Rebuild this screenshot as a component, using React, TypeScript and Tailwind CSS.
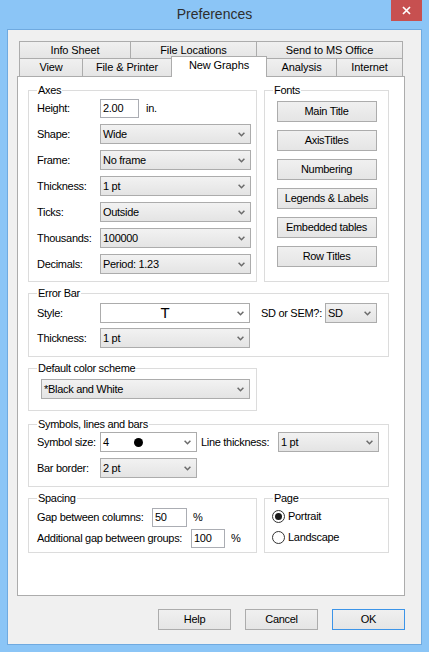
import type { ReactNode } from "react"

type GroupProps = {
  readonly title: string
  readonly className: string
  readonly children?: ReactNode
}

function Group({ title, className, children }: GroupProps) {
  return (
    <div className={`flex flex-col border border-[#dcdcdc] ${className}`}>
      <div className="-mt-[7px] ml-[8px] w-fit bg-white px-px leading-[13px]">{title}</div>
      {children}
    </div>
  )
}

function Chevron() {
  return (
    <svg width="7" height="5" viewBox="0 0 7 5" className="mr-[5px] shrink-0">
      <path d="M0.6 0.7 L3.5 3.7 L6.4 0.7" fill="none" stroke="#6b6b6b" strokeWidth="1.5" />
    </svg>
  )
}

type ComboProps = {
  readonly value: ReactNode
  readonly className: string
  readonly white?: boolean
}

function Combo({ value, className, white = false }: ComboProps) {
  return (
    <div
      className={`flex items-center border border-[#acacac] ${
        white ? "bg-white" : "bg-linear-to-b from-[#f2f2f2] to-[#e4e4e4]"
      } ${className}`}
    >
      <div className="flex min-w-0 flex-1 items-center pl-[2px]">{value}</div>
      <Chevron />
    </div>
  )
}

function TextBox({ value, className }: { readonly value: string; readonly className: string }) {
  return (
    <div className={`flex items-center border border-[#abadb3] bg-white pl-[2px] ${className}`}>
      {value}
    </div>
  )
}

function PushButton({ label, className }: { readonly label: string; readonly className: string }) {
  return (
    <button
      type="button"
      className={`flex items-center justify-center border bg-linear-to-b from-[#f0f0f0] to-[#e5e5e5] leading-[13px] ${className}`}
    >
      {label}
    </button>
  )
}

function Radio({ checked, label }: { readonly checked: boolean; readonly label: string }) {
  return (
    <div className="flex h-[19px] items-center">
      <span className="flex h-[13px] w-[13px] items-center justify-center rounded-full border border-[#333333] bg-white">
        {checked && <span className="h-[7px] w-[7px] rounded-full bg-[#1b1b1b]" />}
      </span>
      <span className="ml-[3px]">{label}</span>
    </div>
  )
}

function Row({ label, children, labelWidth = "w-[63px]" }: {
  readonly label: string
  readonly children: ReactNode
  readonly labelWidth?: string
}) {
  return (
    <div className="flex h-[20px] items-center">
      <span className={`shrink-0 ${labelWidth}`}>{label}</span>
      {children}
    </div>
  )
}

const backTabs = [
  { label: "Info Sheet", width: "w-[111px]" },
  { label: "File Locations", width: "w-[126px]" },
  { label: "Send to MS Office", width: "w-[147px] border-r" },
]

const axesRows = [
  { label: "Shape:", value: "Wide" },
  { label: "Frame:", value: "No frame" },
  { label: "Thickness:", value: "1 pt" },
  { label: "Ticks:", value: "Outside" },
  { label: "Thousands:", value: "100000" },
  { label: "Decimals:", value: "Period: 1.23" },
]

const fontButtons = ["Main Title", "AxisTitles", "Numbering", "Legends & Labels", "Embedded tables", "Row Titles"]

export default function App() {
  return (
    <div className="flex h-[652px] w-[429px] flex-col whitespace-nowrap bg-[#8bc5f6] font-['Liberation_Sans',Arial,sans-serif] text-[11px] leading-[13px] tracking-[-0.3px] text-black">
      <div className="relative flex h-[29px] shrink-0 items-center justify-center pb-[1px]">
        <span className="text-[14px] leading-[18px] tracking-normal text-[#2e2e2e]">Preferences</span>
        <div className="absolute right-[7px] top-0 flex h-[21px] w-[31px] items-center justify-center bg-[#c75050]">
          <svg width="9" height="9" viewBox="0 0 9 9">
            <path d="M1 1 L8 8 M8 1 L1 8" stroke="#ffffff" strokeWidth="1.7" />
          </svg>
        </div>
      </div>

      <div className="mx-[7px] mb-[7px] flex flex-1 flex-col border border-[#6faae0] bg-[#f0f0f0] pl-[9px] pt-[11px]">
        <div className="flex w-[388px] flex-col">
          <div className="ml-[2px] flex h-[17px] tracking-[-0.1px]">
            {backTabs.map((tab) => (
              <div
                key={tab.label}
                className={`flex items-center justify-center border-l border-t border-[#acacac] bg-linear-to-b from-[#f0f0f0] to-[#e5e5e5] ${tab.width}`}
              >
                {tab.label}
              </div>
            ))}
          </div>
          <div className="ml-[2px] flex h-[18px] items-start tracking-[-0.1px]">
            <div className="flex h-[18px] w-[63px] items-center justify-center border-l border-t border-[#acacac] bg-linear-to-b from-[#f0f0f0] to-[#e5e5e5]">
              View
            </div>
            <div className="flex h-[18px] w-[89px] items-center justify-center border-l border-t border-[#acacac] bg-linear-to-b from-[#f0f0f0] to-[#e5e5e5]">
              File &amp; Printer
            </div>
            <div className="relative z-10 -mt-[2px] flex h-[21px] w-[96px] justify-center border-l border-r border-t border-[#acacac] bg-white pt-[2px]">
              New Graphs
            </div>
            <div className="flex h-[18px] w-[69px] items-center justify-center border-t border-[#acacac] bg-linear-to-b from-[#f0f0f0] to-[#e5e5e5]">
              Analysis
            </div>
            <div className="flex h-[18px] w-[67px] items-center justify-center border-l border-r border-t border-[#acacac] bg-linear-to-b from-[#f0f0f0] to-[#e5e5e5]">
              Internet
            </div>
          </div>

          <div className="flex h-[520px] flex-col border border-[#acacac] bg-white pl-[10px] pt-[13px]">
            <div className="flex gap-[7px]">
              <Group title="Axes" className="h-[192px] w-[229px]">
                <div className="mt-[1px] flex flex-col gap-[6px] pl-[8px]">
                  <Row label="Height:">
                    <TextBox value="2.00" className="h-[19px] w-[39px]" />
                    <span className="ml-[7px]">in.</span>
                  </Row>
                  {axesRows.map((row) => (
                    <Row key={row.label} label={row.label}>
                      <Combo value={row.value} className="h-[20px] w-[151px]" />
                    </Row>
                  ))}
                </div>
              </Group>
              <Group title="Fonts" className="h-[192px] w-[125px]">
                <div className="mt-[4px] flex flex-col items-center gap-[8px]">
                  {fontButtons.map((label) => (
                    <PushButton key={label} label={label} className="h-[21px] w-[100px] border-[#acacac]" />
                  ))}
                </div>
              </Group>
            </div>

            <Group title="Error Bar" className="mt-[11px] h-[64px] w-[361px]">
              <div className="mt-[3px] flex flex-col gap-[5px] pl-[8px]">
                <Row label="Style:">
                  <Combo
                    white
                    value={<span className="flex-1 pr-[10px] text-center text-[15px] leading-[16px]">T</span>}
                    className="h-[20px] w-[150px]"
                  />
                  <span className="ml-[11px] w-[64px] shrink-0">SD or SEM?:</span>
                  <Combo value="SD" className="h-[20px] w-[52px]" />
                </Row>
                <Row label="Thickness:">
                  <Combo value="1 pt" className="h-[20px] w-[150px]" />
                </Row>
              </div>
            </Group>

            <Group title="Default color scheme" className="mt-[11px] h-[43px] w-[229px]">
              <Combo value="*Black and White" className="ml-[12px] mt-[4px] h-[20px] w-[209px]" />
            </Group>

            <Group title="Symbols, lines and bars" className="mt-[13px] h-[63px] w-[361px]">
              <div className="mt-[1px] flex flex-col gap-[6px] pl-[8px]">
                <Row label="Symbol size:">
                  <Combo
                    white
                    value={
                      <>
                        <span className="w-[31px]">4</span>
                        <span className="h-[9px] w-[9px] rounded-full bg-black" />
                      </>
                    }
                    className="h-[20px] w-[97px]"
                  />
                  <span className="ml-[4px] w-[77px] shrink-0">Line thickness:</span>
                  <Combo value="1 pt" className="h-[20px] w-[101px]" />
                </Row>
                <Row label="Bar border:">
                  <Combo value="2 pt" className="h-[20px] w-[97px]" />
                </Row>
              </div>
            </Group>

            <div className="mt-[11px] flex gap-[7px]">
              <Group title="Spacing" className="h-[55px] w-[229px]">
                <div className="mt-[2px] flex flex-col gap-[1px] pl-[8px]">
                  <Row label="Gap between columns:" labelWidth="w-[115px]">
                    <TextBox value="50" className="h-[19px] w-[35px]" />
                    <span className="ml-[6px]">%</span>
                  </Row>
                  <Row label="Additional gap between groups:" labelWidth="w-[154px]">
                    <TextBox value="100" className="h-[19px] w-[34px]" />
                    <span className="ml-[6px]">%</span>
                  </Row>
                </div>
              </Group>
              <Group title="Page" className="h-[55px] w-[125px]">
                <div className="mt-[2px] flex flex-col gap-[2px] pl-[7px]">
                  <Radio checked label="Portrait" />
                  <Radio checked={false} label="Landscape" />
                </div>
              </Group>
            </div>
          </div>
        </div>

        <div className="mt-[13px] flex w-[388px] justify-end gap-[14px]">
          <PushButton label="Help" className="h-[21px] w-[73px] border-[#acacac]" />
          <PushButton label="Cancel" className="h-[21px] w-[73px] border-[#acacac]" />
          <PushButton label="OK" className="h-[21px] w-[73px] border-[#3c94e8]" />
        </div>
      </div>
    </div>
  )
}
